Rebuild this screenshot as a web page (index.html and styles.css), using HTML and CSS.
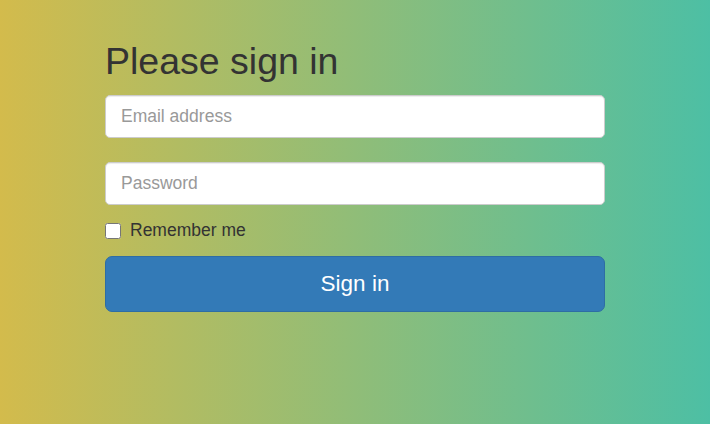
FILE: index.html
```html
<!DOCTYPE html>
<html lang="en">
<head>
<meta charset="utf-8">
<title>Please sign in</title>
<link rel="stylesheet" href="styles.css">
</head>
<body>
<div class="page">
  <form class="form-signin">
    <h2 class="form-signin-heading">Please sign in</h2>
    <input type="email" class="form-control email" placeholder="Email address">
    <input type="password" class="form-control password" placeholder="Password">
    <label class="checkbox">
      <input type="checkbox" value="remember-me">
      <span>Remember me</span>
    </label>
    <button class="btn-signin" type="button">Sign in</button>
  </form>
</div>
</body>
</html>
```

FILE: styles.css
```css
html, body {
  margin: 0;
  padding: 0;
}
body {
  font-family: "Liberation Sans", Arial, sans-serif;
  color: #333;
  background: linear-gradient(to right, #d3bb4c, #4dbfa4);
  min-height: 424px;
}
.page {
  padding-top: 41px;
}
.form-signin {
  width: 500px;
  margin: 0 auto;
  display: flex;
  flex-direction: column;
}
.form-signin-heading {
  margin: 0 0 12.5px;
  font-size: 37.5px;
  line-height: 41.25px;
  font-weight: 500;
  color: #333;
}
.form-control {
  box-sizing: border-box;
  display: block;
  width: 100%;
  height: 43.5px;
  margin: 0;
  padding: 7.5px 15px;
  font-family: "Liberation Sans", Arial, sans-serif;
  font-size: 17.5px;
  color: #555;
  background: #fff;
  border: 1px solid #ccc;
  border-radius: 5px;
  box-shadow: inset 0 1px 1px rgba(0,0,0,.075);
  outline: none;
}
.form-control::placeholder {
  color: #999;
  opacity: 1;
}
.email {
  margin-bottom: 23.5px;
}
.checkbox {
  display: flex;
  align-items: center;
  margin: 13px 0 12.5px;
  height: 25px;
  font-size: 17.5px;
  line-height: 25px;
  color: #333;
}
.checkbox input {
  width: 16px;
  height: 16px;
  margin: 1px 9px 0 0;
}
.btn-signin {
  box-sizing: border-box;
  width: 100%;
  height: 56.5px;
  font-family: "Liberation Sans", Arial, sans-serif;
  font-size: 22.5px;
  color: #fff;
  background: #337ab7;
  border: 1px solid #2e6da4;
  border-radius: 7px;
  padding: 0;
  cursor: pointer;
}
```
